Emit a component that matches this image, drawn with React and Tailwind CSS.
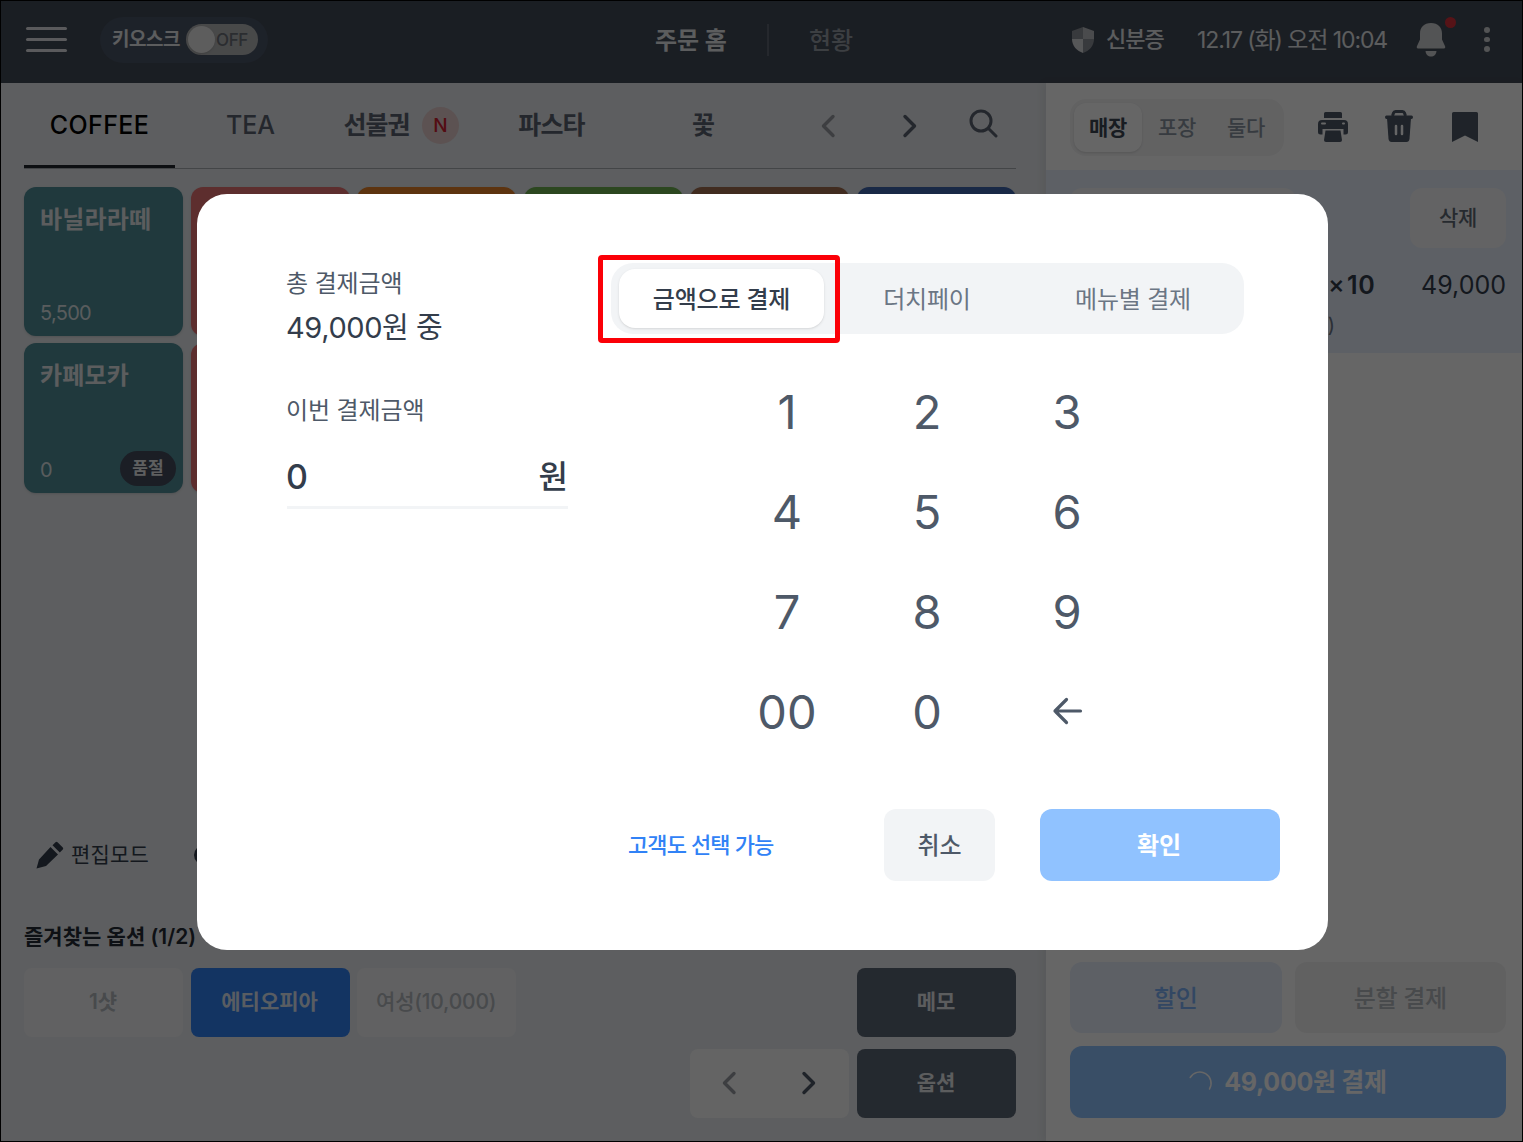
import React from "react";

const menuCards = [
  { name: "바닐라라떼", price: "5,500", color: "bg-[#508e99]" },
  { color: "bg-[#e97373]" },
  { color: "bg-[#e8822a]" },
  { color: "bg-[#6fb152]" },
  { color: "bg-[#a36f51]" },
  { color: "bg-[#3f66b0]" },
  { name: "카페모카", price: "0", soldOut: true, color: "bg-[#508e99]" },
  { color: "bg-[#e97373]" },
];

const keys = ["1", "2", "3", "4", "5", "6", "7", "8", "9", "00", "0"];

const Chevron = ({ left, className }) => (
  <svg width="16" height="24" viewBox="0 0 16 24" fill="none" stroke="currentColor" strokeWidth="3.4" strokeLinecap="round" strokeLinejoin="round" className={className}>
    <path d={left ? "M13 2.5L3.5 12L13 21.5" : "M3 2.5L12.5 12L3 21.5"} />
  </svg>
);

const Header = () => (
  <header className="h-[83px] shrink-0 bg-[#434b57] flex items-center pl-[26px] pr-[27px] pb-1 text-[#e5e8eb]">
    {/* Menu + kiosk switch */}
    <div className="w-[629px] flex items-center">
      <div className="w-[41px] flex flex-col gap-[8.5px]">
        <div className="h-[2.5px] rounded bg-[#e0e2e5]" />
        <div className="h-[2.5px] rounded bg-[#e0e2e5]" />
        <div className="h-[2.5px] rounded bg-[#e0e2e5]" />
      </div>
      <div className="ml-[33px] h-[46px] w-[168px] rounded-full bg-[#4a5566] flex items-center pl-3">
        <span className="text-[19px] font-bold tracking-[-0.5px] w-[74px] pt-0.5 whitespace-nowrap">키오스크</span>
        <div className="h-[31px] w-[72px] rounded-full bg-[#b5b6b7] flex items-center pl-0.5">
          <div className="size-[27px] rounded-full bg-[#e8e8e8] shadow" />
          <span className="text-[17px] font-medium tracking-[-0.4px] text-[#6b7079] ml-px pt-0.5">OFF</span>
        </div>
      </div>
    </div>
    {/* Center navigation */}
    <div className="flex items-center w-[416px] whitespace-nowrap">
      <span className="text-[24px] font-bold w-[112px] pt-0.5">주문 홈</span>
      <div className="h-8 w-0.5 bg-[#5c6470]" />
      <span className="text-[24px] font-medium text-[#979da6] ml-10 pt-0.5">현황</span>
    </div>
    {/* Status area */}
    <div className="flex items-center whitespace-nowrap">
      <svg width="24" height="27" viewBox="0 0 24 27">
        <path d="M12 1L23 5V14H12Z" fill="#b9bcc1" />
        <path d="M12 1L1 5V14H12Z" fill="#8d9299" />
        <path d="M1 13C1 20 6 25 12 27V13Z" fill="#d7d9dc" />
        <path d="M23 13C23 20 18 25 12 27V13Z" fill="#8d9299" />
      </svg>
      <span className="text-[22px] font-medium tracking-[-1px] ml-[11px] w-[91px]">신분증</span>
      <span className="text-[23px] tracking-[-1.1px] w-[219px] pt-0.5">12.17 (화) 오전 10:04</span>
      <div className="relative">
        <svg width="30" height="34" viewBox="0 0 30 34" fill="#cfd1d4">
          <path d="M15 0C8 0 4 4.500 4 10.500V16.500L.8 23.500Q.3 25.500 2 25.500H28Q29.700 25.500 29.200 23.500L26 16.500V10.500C26 4.500 22 0 15 0Z" />
          <path d="M9.500 28H20.500C20 32 18 33.500 15 33.500S10 32 9.500 28Z" />
        </svg>
        <div className="absolute -right-2.5 -top-1.5 size-[11px] rounded-full bg-[#d8303a]" />
      </div>
      <div className="ml-[38px] flex flex-col gap-1">
        <div className="size-[5.500px] rounded-full bg-[#cfd1d4]" />
        <div className="size-[5.500px] rounded-full bg-[#cfd1d4]" />
        <div className="size-[5.500px] rounded-full bg-[#cfd1d4]" />
      </div>
    </div>
  </header>
);

const Categories = () => (
  <div className="h-[86px] shrink-0 border-b border-[#a9acb1] flex text-[25px] font-medium text-[#5a6370] whitespace-nowrap">
    <div className="w-[151px] h-[85px] border-b-[3px] pt-[3px] border-[#22262d] flex items-center justify-center tracking-[0.4px] text-black">COFFEE</div>
    <div className="w-[151px] h-[85px] flex items-center justify-center">TEA</div>
    <div className="w-[151px] h-[85px] pr-px flex items-center justify-center gap-3 font-semibold tracking-[-1px]">
      선불권
      <span className="size-[37px] rounded-full bg-[#e5cccd] text-[#d22030] text-[19px] font-medium pt-px flex items-center justify-center">N</span>
    </div>
    <div className="w-[151px] h-[85px] pr-0.5 flex items-center justify-center font-semibold tracking-[-0.9px]">파스타</div>
    <div className="w-[151px] h-[85px] flex items-center justify-center font-semibold">꽃</div>
    <div className="flex items-center text-[#5a6370] pl-[41px]">
      <Chevron left className="text-[#989ca2]" />
      <Chevron className="ml-[66px]" />
      <svg width="29" height="29" viewBox="0 0 29 29" fill="none" stroke="currentColor" strokeWidth="3" strokeLinecap="round" className="ml-[51px] mb-1">
        <circle cx="12" cy="12" r="10" />
        <path d="M19.500 19.500L27 27" />
      </svg>
    </div>
  </div>
);

const MenuArea = () => (
  <main className="w-[1046px] bg-[#e8ebef] pl-6 pr-[30px] flex flex-col">
    <Categories />
    <div className="mt-[18px] grid grid-cols-6 grid-rows-[149px_150px] gap-x-[7.6px] gap-y-[7px]">
      {menuCards.map((card, i) => (
        <div key={i} className={`rounded-xl p-4 pt-[17px] pb-3 flex flex-col justify-between shadow-sm ${card.color}`}>
          <span className="text-[24px] leading-[31px] font-bold tracking-[0.2px] text-[#e6e9eb]">{card.name}</span>
          <div className="flex items-center justify-between h-[22px]">
            <span className="text-[20px] tracking-[-0.7px] text-[#dfe6e8]">{card.price}</span>
            {card.soldOut && (
              <span className="h-[35px] w-14 -mr-[9px] mb-1 rounded-full bg-[#444b5c] text-[17px] font-bold text-[#eceef0] pt-px flex items-center justify-center">품절</span>
            )}
          </div>
        </div>
      ))}
    </div>

    {/* Edit mode */}
    <div className="mt-[346px] h-8 flex items-center pl-3 text-[#333d4b]">
      <svg width="28" height="28" viewBox="0 0 28 28" fill="currentColor">
        <path d="M.5 27.500L3 18.500L14.500 6L22 13.500L10 25ZM16.500 4.300L19.500 1.200Q20.500 .3 21.500 1.200L26.800 6.500Q27.700 7.500 26.800 8.500L23.800 11.600Z" />
      </svg>
      <span className="text-[21px] tracking-[0.2px] ml-[7px] w-[123px]">편집모드</span>
      <div className="size-5 rounded-full bg-[#333d4b]" />
    </div>
    <div className="mt-[50px] h-8 pb-px flex items-center text-[21px] font-semibold text-[#252b35]">즐겨찾는 옵션 (1/2)</div>

    {/* Favorite options */}
    <div className="mt-[15px] grid grid-cols-6 gap-x-[7.6px] gap-y-3 text-[21px] font-medium *:h-[69px] *:rounded-lg *:pb-0.5 *:pr-px *:flex *:items-center *:justify-center">
      <div className="bg-[#f2f3f5] text-[#b3b8be] font-semibold">1샷</div>
      <div className="bg-[#3182f6] text-[#dfe8f5] font-semibold">에티오피아</div>
      <div className="bg-[#f2f3f5] text-[#b3b8be] tracking-[-0.2px]">여성(10,000)</div>
      <div className="col-start-6 bg-[#5b6675] text-[#e5e8eb] font-semibold">메모</div>
      <div className="col-start-5 bg-[#fafafa] text-[#4e5968] gap-16">
        <Chevron left className="text-[#989ca2]" />
        <Chevron />
      </div>
      <div className="bg-[#5b6675] text-[#e5e8eb] font-semibold">옵션</div>
    </div>
  </main>
);

const OrderPanel = () => (
  <aside className="flex-1 bg-white flex flex-col shadow-[-3px_0_8px_rgba(0,0,0,0.06)]">
    <div className="h-[87px] pl-6 flex items-center text-[#4e5968]">
      <div className="mt-0.5 h-[57px] w-[214px] rounded-2xl bg-[#f5f5f6] flex items-center px-1 text-[21px] font-medium tracking-[-0.3px] text-[#8b95a1]">
        <div className="w-[68px] h-[49px] rounded-xl bg-white shadow-sm text-[#3d4653] font-semibold flex items-center justify-center">매장</div>
        <div className="w-[70px] text-center">포장</div>
        <div className="w-[68px] text-center">둘다</div>
      </div>
      <svg width="32" height="32" viewBox="0 0 32 32" fill="currentColor" className="ml-[33px]">
        <path d="M8.500 1H23.500Q25 1 25 2.500V7H7V2.500Q7 1 8.500 1ZM5 9H27Q31 9 31 13V21Q31 23.500 28.500 23.500H26.500V18H5.500V23.500H3.500Q1 23.500 1 21V13Q1 9 5 9Z" />
        <path d="M8.500 19.500H23.500L25 29Q25 31 23 31H9Q7 31 7 29Z" />
        <path d="M5 12.500H8M26 12.500H27" stroke="#fff" strokeWidth="2" strokeLinecap="round" />
      </svg>
      <svg width="30" height="34" viewBox="0 0 30 34" fill="currentColor" className="ml-[35px] mb-0.5">
        <path d="M8.500 7L9.500 4Q10 2.500 11.500 2.500H18.500Q20 2.500 20.500 4L21.500 7" fill="none" stroke="currentColor" strokeWidth="3" />
        <path d="M2.500 6.500H27.500Q29 6.500 29 8.200T27.500 10H2.500Q1 10 1 8.200T2.500 6.500Z" />
        <path d="M3 9H27L25.500 30Q25 33 22.500 33H7.500Q5 33 4.500 30Z" />
        <path d="M12 17V25M18 17V25" stroke="#fff" strokeWidth="2.500" strokeLinecap="round" />
      </svg>
      <svg width="26" height="30" viewBox="0 0 26 30" fill="currentColor" className="ml-[38px]">
        <path d="M1.500 0H24.500Q26 0 26 1.500V30L13 23.500L0 30V1.500Q0 0 1.500 0Z" />
      </svg>
    </div>

    {/* Selected order line */}
    <div className="h-[183px] bg-[#e8effd] pl-6 pr-[17px] pt-[18px] text-[#333d4b]">
      <div className="flex justify-between">
        <div className="w-[226px] h-[60px] rounded-xl bg-[#f7f8fa]" />
        <div className="w-24 h-[60px] rounded-xl bg-[#f7f8fa] text-[21px] font-medium tracking-[-0.2px] text-[#5f6975] flex items-center justify-center">삭제</div>
      </div>
      <div className="mt-5 flex justify-end text-[25px] leading-[34px]">
        <span className="font-medium w-[19px] -mt-px">×</span>
        <span className="font-semibold tracking-[0.5px] w-[74px]">10</span>
        <span>49,000</span>
      </div>
      <div className="mt-2.5 pr-[171px] text-right text-[20px] leading-[28px] text-[#6b7684]">(1)</div>
    </div>

    {/* Payment buttons */}
    <div className="mt-auto pl-6 pr-[17px] pb-6 grid grid-cols-2 grid-rows-[71px_72px] gap-[13px] text-[24px] font-medium tracking-[-0.3px] *:rounded-xl *:pt-0.5 *:flex *:items-center *:justify-center">
      <div className="bg-[#e8effd] text-[#7db2f7]">할인</div>
      <div className="bg-[#f2f2f3] text-[#b3b8be]">분할 결제</div>
      <div className="col-span-2 bg-[#90c2ff] text-white font-bold text-[25px] gap-[11px]">
        <svg width="24" height="24" viewBox="0 0 24 24" fill="none" stroke="currentColor" strokeWidth="1.500" strokeLinecap="round" className="mb-1">
          <path d="M1.200 8.500A11.200 11.200 0 0 1 20.500 20" />
        </svg>
        49,000원 결제
      </div>
    </div>
  </aside>
);

const PaymentModal = () => (
  <div className="w-[1131px] h-[756px] rounded-[30px] bg-white flex text-[#4e5968] whitespace-nowrap">
    {/* Amount */}
    <div className="w-[414px] shrink-0 pl-[89px] pt-[73px]">
      <div className="text-[24px] leading-[34px] tracking-[-0.1px]">총 결제금액</div>
      <div className="mt-2.5 text-[29px] leading-[34px] tracking-[-0.4px] text-[#333d4b]">49,000원 중</div>
      <div className="mt-[49px] text-[24px] leading-[34px] tracking-[-0.1px]">이번 결제금액</div>
      <div className="mt-[19px] ml-px w-[281px] h-[62px] border-b-[3px] border-[#f2f4f6] flex items-center justify-between text-[32px] font-medium text-[#333d4b]">
        <span className="text-[34px] -ml-px">0</span>
        <span>원</span>
      </div>
    </div>

    <div className="w-[669px] pt-[69px] flex flex-col">
      {/* Payment method tabs */}
      <div className="relative w-[633px] h-[71px] rounded-[22px] bg-[#f2f4f6] px-2 flex items-center text-[24px] tracking-[-0.2px] text-[#6b7684]">
        <div className="w-[205px] h-[59px] pt-0.5 rounded-2xl bg-white shadow-sm flex items-center justify-center font-medium text-[#333d4b]">금액으로 결제</div>
        <div className="w-[206px] pt-0.5 text-center">더치페이</div>
        <div className="w-[206px] pt-0.5 text-center">메뉴별 결제</div>
        <div className="absolute -left-[13px] -top-2 w-[242px] h-[88px] border-[5px] border-[#fb0007] rounded-sm" />
      </div>

      {/* Keypad */}
      <div className="mt-[27px] ml-[106px] grid grid-cols-[repeat(3,140px)] auto-rows-[100px] text-[47px]">
        {keys.map((key) => (
          <div key={key} className="pt-0.5 flex items-center justify-center">{key}</div>
        ))}
        <div className="flex items-center justify-center">
          <svg width="32" height="28" viewBox="0 0 32 28" fill="none" stroke="currentColor" strokeWidth="3.200" strokeLinecap="round" strokeLinejoin="round">
            <path d="M15.500 2.500L4 14L15.500 25.500M4 14H29.500" />
          </svg>
        </div>
      </div>

      {/* Actions */}
      <div className="mt-[48px] flex items-center text-[24px] font-medium">
        <span className="ml-[17px] w-[256px] text-[22px] tracking-[-0.9px] text-[#3182f6]">고객도 선택 가능</span>
        <button className="w-[111px] h-[72px] pt-px rounded-xl bg-[#f2f4f6]">취소</button>
        <button className="ml-[45px] w-[240px] h-[72px] pt-px pr-0.5 rounded-xl bg-[#90c2ff] text-white font-bold">확인</button>
      </div>
    </div>
  </div>
);

const App = () => {
  return (
    <div className="relative w-[1523px] h-[1142px] overflow-hidden flex flex-col font-['Inter','Noto_Sans_CJK_KR',sans-serif]">
      <Header />
      <div className="flex-1 flex">
        <MenuArea />
        <OrderPanel />
      </div>
      <div className="absolute inset-0 bg-black/60 border border-black flex items-center justify-center pt-0.5 pl-0.5">
        <PaymentModal />
      </div>
    </div>
  );
};

export default App;
